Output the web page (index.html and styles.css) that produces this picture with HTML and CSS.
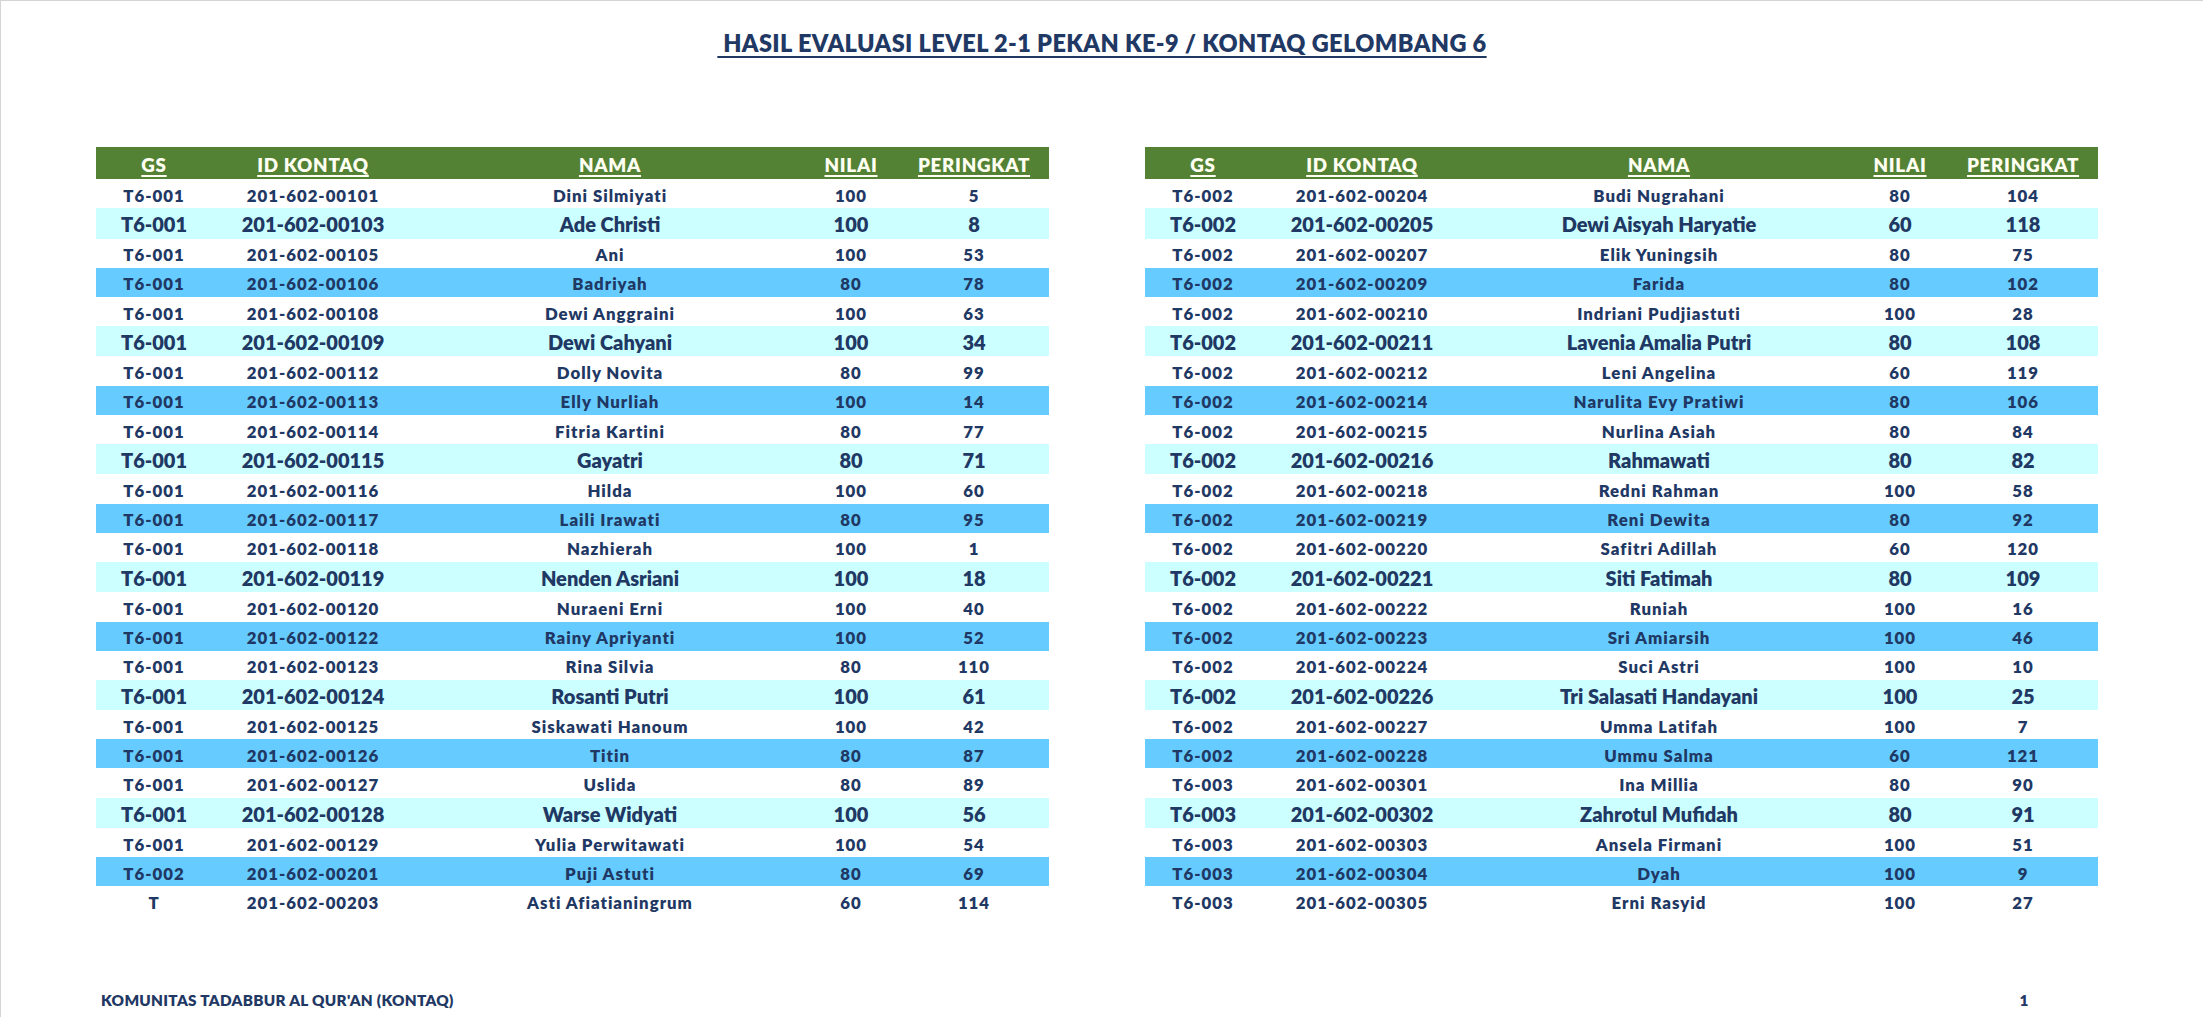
FILE: index.html
```html
<!DOCTYPE html>
<html lang="id">
<head>
<meta charset="utf-8">
<title>Hasil Evaluasi Level 2-1 Pekan Ke-9</title>
<link rel="stylesheet" href="styles.css">
</head>
<body>
<div class="page">
  <h1 class="title"><span class="title-text">&nbsp;HASIL EVALUASI LEVEL 2-1 PEKAN KE-9 / KONTAQ GELOMBANG 6</span></h1>

  <div class="sheets">
    <div class="sheet">
      <div class="row head"><div><u>GS</u></div><div><u>ID KONTAQ</u></div><div><u>NAMA</u></div><div><u>NILAI</u></div><div class="rank"><u>PERINGKAT</u></div></div>
      <div class="row w"><div>T6-001</div><div>201-602-00101</div><div>Dini Silmiyati</div><div>100</div><div class="rank">5</div></div>
      <div class="row c"><div>T6-001</div><div>201-602-00103</div><div>Ade Christi</div><div>100</div><div class="rank">8</div></div>
      <div class="row w"><div>T6-001</div><div>201-602-00105</div><div>Ani</div><div>100</div><div class="rank">53</div></div>
      <div class="row b"><div>T6-001</div><div>201-602-00106</div><div>Badriyah</div><div>80</div><div class="rank">78</div></div>
      <div class="row w"><div>T6-001</div><div>201-602-00108</div><div>Dewi Anggraini</div><div>100</div><div class="rank">63</div></div>
      <div class="row c"><div>T6-001</div><div>201-602-00109</div><div>Dewi Cahyani</div><div>100</div><div class="rank">34</div></div>
      <div class="row w"><div>T6-001</div><div>201-602-00112</div><div>Dolly Novita</div><div>80</div><div class="rank">99</div></div>
      <div class="row b"><div>T6-001</div><div>201-602-00113</div><div>Elly Nurliah</div><div>100</div><div class="rank">14</div></div>
      <div class="row w"><div>T6-001</div><div>201-602-00114</div><div>Fitria Kartini</div><div>80</div><div class="rank">77</div></div>
      <div class="row c"><div>T6-001</div><div>201-602-00115</div><div>Gayatri</div><div>80</div><div class="rank">71</div></div>
      <div class="row w"><div>T6-001</div><div>201-602-00116</div><div>Hilda</div><div>100</div><div class="rank">60</div></div>
      <div class="row b"><div>T6-001</div><div>201-602-00117</div><div>Laili Irawati</div><div>80</div><div class="rank">95</div></div>
      <div class="row w"><div>T6-001</div><div>201-602-00118</div><div>Nazhierah</div><div>100</div><div class="rank">1</div></div>
      <div class="row c"><div>T6-001</div><div>201-602-00119</div><div>Nenden Asriani</div><div>100</div><div class="rank">18</div></div>
      <div class="row w"><div>T6-001</div><div>201-602-00120</div><div>Nuraeni Erni</div><div>100</div><div class="rank">40</div></div>
      <div class="row b"><div>T6-001</div><div>201-602-00122</div><div>Rainy Apriyanti</div><div>100</div><div class="rank">52</div></div>
      <div class="row w"><div>T6-001</div><div>201-602-00123</div><div>Rina Silvia</div><div>80</div><div class="rank">110</div></div>
      <div class="row c"><div>T6-001</div><div>201-602-00124</div><div>Rosanti Putri</div><div>100</div><div class="rank">61</div></div>
      <div class="row w"><div>T6-001</div><div>201-602-00125</div><div>Siskawati Hanoum</div><div>100</div><div class="rank">42</div></div>
      <div class="row b"><div>T6-001</div><div>201-602-00126</div><div>Titin</div><div>80</div><div class="rank">87</div></div>
      <div class="row w"><div>T6-001</div><div>201-602-00127</div><div>Uslida</div><div>80</div><div class="rank">89</div></div>
      <div class="row c"><div>T6-001</div><div>201-602-00128</div><div>Warse Widyati</div><div>100</div><div class="rank">56</div></div>
      <div class="row w"><div>T6-001</div><div>201-602-00129</div><div>Yulia Perwitawati</div><div>100</div><div class="rank">54</div></div>
      <div class="row b"><div>T6-002</div><div>201-602-00201</div><div>Puji Astuti</div><div>80</div><div class="rank">69</div></div>
      <div class="row w"><div>T</div><div>201-602-00203</div><div>Asti Afiatianingrum</div><div>60</div><div class="rank">114</div></div>
    </div>

    <div class="sheet">
      <div class="row head"><div><u>GS</u></div><div><u>ID KONTAQ</u></div><div><u>NAMA</u></div><div><u>NILAI</u></div><div class="rank"><u>PERINGKAT</u></div></div>
      <div class="row w"><div>T6-002</div><div>201-602-00204</div><div>Budi Nugrahani</div><div>80</div><div class="rank">104</div></div>
      <div class="row c"><div>T6-002</div><div>201-602-00205</div><div>Dewi Aisyah Haryatie</div><div>60</div><div class="rank">118</div></div>
      <div class="row w"><div>T6-002</div><div>201-602-00207</div><div>Elik Yuningsih</div><div>80</div><div class="rank">75</div></div>
      <div class="row b"><div>T6-002</div><div>201-602-00209</div><div>Farida</div><div>80</div><div class="rank">102</div></div>
      <div class="row w"><div>T6-002</div><div>201-602-00210</div><div>Indriani Pudjiastuti</div><div>100</div><div class="rank">28</div></div>
      <div class="row c"><div>T6-002</div><div>201-602-00211</div><div>Lavenia Amalia Putri</div><div>80</div><div class="rank">108</div></div>
      <div class="row w"><div>T6-002</div><div>201-602-00212</div><div>Leni Angelina</div><div>60</div><div class="rank">119</div></div>
      <div class="row b"><div>T6-002</div><div>201-602-00214</div><div>Narulita Evy Pratiwi</div><div>80</div><div class="rank">106</div></div>
      <div class="row w"><div>T6-002</div><div>201-602-00215</div><div>Nurlina Asiah</div><div>80</div><div class="rank">84</div></div>
      <div class="row c"><div>T6-002</div><div>201-602-00216</div><div>Rahmawati</div><div>80</div><div class="rank">82</div></div>
      <div class="row w"><div>T6-002</div><div>201-602-00218</div><div>Redni Rahman</div><div>100</div><div class="rank">58</div></div>
      <div class="row b"><div>T6-002</div><div>201-602-00219</div><div>Reni Dewita</div><div>80</div><div class="rank">92</div></div>
      <div class="row w"><div>T6-002</div><div>201-602-00220</div><div>Safitri Adillah</div><div>60</div><div class="rank">120</div></div>
      <div class="row c"><div>T6-002</div><div>201-602-00221</div><div>Siti Fatimah</div><div>80</div><div class="rank">109</div></div>
      <div class="row w"><div>T6-002</div><div>201-602-00222</div><div>Runiah</div><div>100</div><div class="rank">16</div></div>
      <div class="row b"><div>T6-002</div><div>201-602-00223</div><div>Sri Amiarsih</div><div>100</div><div class="rank">46</div></div>
      <div class="row w"><div>T6-002</div><div>201-602-00224</div><div>Suci Astri</div><div>100</div><div class="rank">10</div></div>
      <div class="row c"><div>T6-002</div><div>201-602-00226</div><div>Tri Salasati Handayani</div><div>100</div><div class="rank">25</div></div>
      <div class="row w"><div>T6-002</div><div>201-602-00227</div><div>Umma Latifah</div><div>100</div><div class="rank">7</div></div>
      <div class="row b"><div>T6-002</div><div>201-602-00228</div><div>Ummu Salma</div><div>60</div><div class="rank">121</div></div>
      <div class="row w"><div>T6-003</div><div>201-602-00301</div><div>Ina Millia</div><div>80</div><div class="rank">90</div></div>
      <div class="row c"><div>T6-003</div><div>201-602-00302</div><div>Zahrotul Mufidah</div><div>80</div><div class="rank">91</div></div>
      <div class="row w"><div>T6-003</div><div>201-602-00303</div><div>Ansela Firmani</div><div>100</div><div class="rank">51</div></div>
      <div class="row b"><div>T6-003</div><div>201-602-00304</div><div>Dyah</div><div>100</div><div class="rank">9</div></div>
      <div class="row w"><div>T6-003</div><div>201-602-00305</div><div>Erni Rasyid</div><div>100</div><div class="rank">27</div></div>
    </div>
  </div>

  <div class="footer">
    <div class="org">KOMUNITAS TADABBUR AL QUR'AN (KONTAQ)</div>
    <div class="pageno">1</div>
  </div>
</div>
</body>
</html>
```
FILE: styles.css
```css
html, body {
  margin: 0;
  padding: 0;
  background: #ffffff;
}

body {
  font-family: Lato, "Open Sans", "Liberation Sans", sans-serif;
  font-weight: 800;
  color: #1f3864;
}

.page {
  box-sizing: border-box;
  width: 2203px;
  height: 1017px;
  border-top: 1px solid #d4d4d4;
  border-left: 1px solid #d4d4d4;
  overflow: hidden;
}

.title {
  margin: 0;
  padding-top: 28px;
  font-size: 23.5px;
  line-height: 28px;
  font-weight: 800;
  text-align: center;
  letter-spacing: 0.4px;
  color: #1f3864;
}

.title-text {
  text-decoration: underline;
  text-decoration-thickness: 2px;
  text-underline-offset: 4px;
}

.sheets {
  display: flex;
  gap: 96px;
  margin-top: 90px;
  padding-left: 95px;
}

.sheet {
  width: 953px;
  display: flex;
  flex-direction: column;
}

.row {
  display: grid;
  grid-template-columns: 116px 202px 392px 90px 153px;
  align-items: end;
  text-align: center;
  white-space: nowrap;
  line-height: 1;
}

.rank {
  padding-left: 3px;
}

.head {
  height: 32px;
  background: #548235;
  color: #fffff2;
  font-size: 18.8px;
  letter-spacing: 0.7px;
  padding-bottom: 4px;
  box-sizing: border-box;
}

.head u {
  text-decoration: underline;
  text-decoration-thickness: 2px;
  text-underline-offset: 3px;
}

.w, .b {
  height: 29.3px;
  font-size: 16.8px;
  letter-spacing: 1px;
  padding-bottom: 3.7px;
  box-sizing: border-box;
}

.b {
  height: 29px;
  background: #66ccff;
}

.c {
  height: 30.3px;
  background: #ccffff;
  font-size: 20px;
  letter-spacing: 0;
  padding-bottom: 4.4px;
  box-sizing: border-box;
}

.footer {
  display: flex;
  justify-content: space-between;
  align-items: flex-end;
  margin-top: 77px;
  padding-left: 100px;
  padding-right: 104px;
  font-size: 15.3px;
  line-height: 1;
  letter-spacing: 0.3px;
}

.pageno {
  width: 153px;
  text-align: center;
  padding-left: 3px;
  box-sizing: border-box;
}
```
